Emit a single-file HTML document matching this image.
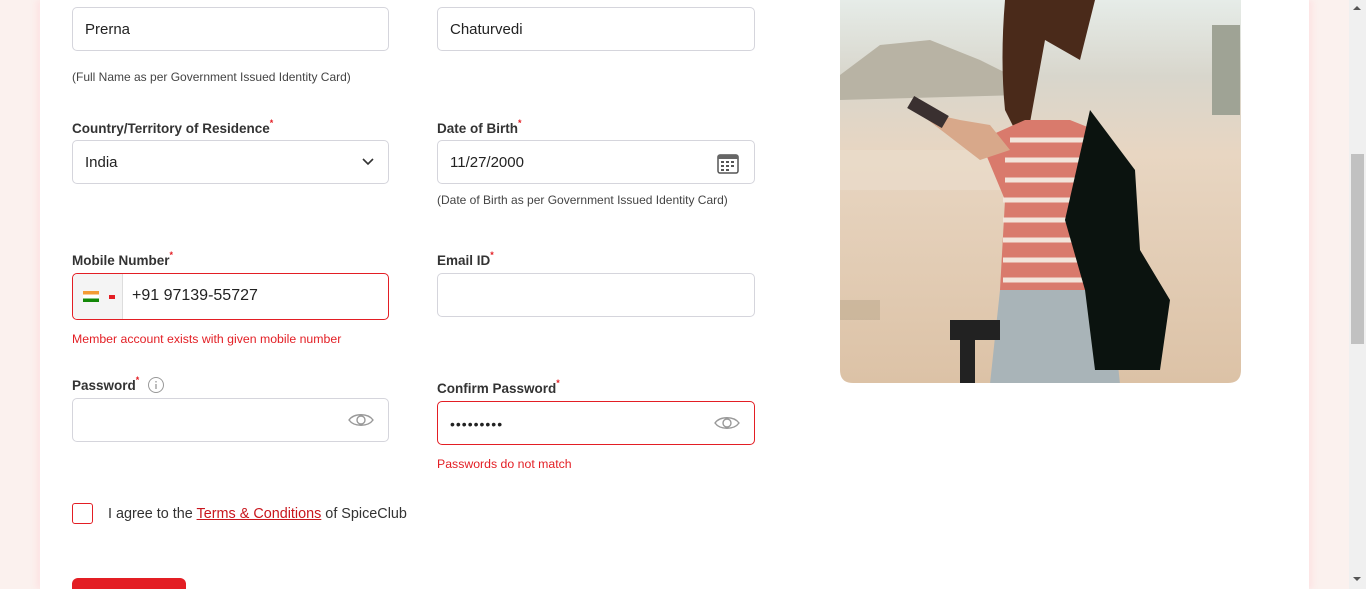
<!DOCTYPE html>
<html><head><style>
*{margin:0;padding:0;box-sizing:border-box}
html,body{width:1366px;height:589px;overflow:hidden}
body{background:#fbf1ee;font-family:"Liberation Sans",sans-serif;position:relative;color:#333}
.card{position:absolute;left:40px;top:0;width:1269px;height:589px;background:#fff;box-shadow:-4px 0 6px #fde4e4,4px 0 6px #fde4e4}
.a{position:absolute}
.inp{position:absolute;height:44px;border:1px solid #d5d5dc;border-radius:5px;background:#fff;font-size:15px;color:#222;padding-left:12px;line-height:44px}
.err{border-color:#e31e24}
.lbl{position:absolute;font-size:13.5px;font-weight:bold;color:#333}
.lbl sup{color:#e31e24;font-size:9px;vertical-align:top;position:relative;top:-3px}
.hint{position:absolute;font-size:12px;color:#444}
.em{position:absolute;font-size:12.3px;color:#e31e24}
.sb{position:absolute;left:1349px;top:0;width:17px;height:589px;background:#f0f0f0}
</style></head><body>
<div class="card"></div>
<div class="inp" style="left:72px;top:7px;width:317px">Prerna</div>
<div class="inp" style="left:437px;top:7px;width:318px">Chaturvedi</div>
<div class="hint" style="left:72px;top:70px">(Full Name as per Government Issued Identity Card)</div>

<div class="lbl" style="left:72px;top:121px">Country/Territory of Residence<sup>*</sup></div>
<div class="inp" style="left:72px;top:140px;width:317px">India
<svg class="a" style="left:288px;top:16px" width="14" height="10"><path d="M2 2l5 5 5-5" fill="none" stroke="#333" stroke-width="1.6"/></svg></div>
<div class="lbl" style="left:437px;top:121px">Date of Birth<sup>*</sup></div>
<div class="inp" style="left:437px;top:140px;width:318px">11/27/2000
<svg class="a" style="left:278px;top:10px" width="24" height="24"><rect x="2" y="4" width="20" height="18" rx="2" fill="#fff" stroke="#555" stroke-width="1.5"/><rect x="2" y="4" width="20" height="4" fill="#666"/><g fill="#555"><rect x="5" y="10" width="3" height="2"/><rect x="10" y="10" width="3" height="2"/><rect x="15" y="10" width="3" height="2"/><rect x="5" y="14" width="3" height="2"/><rect x="10" y="14" width="3" height="2"/><rect x="15" y="14" width="3" height="2"/><rect x="5" y="18" width="3" height="2"/><rect x="10" y="18" width="3" height="2"/></g></svg></div>
<div class="hint" style="left:437px;top:193px">(Date of Birth as per Government Issued Identity Card)</div>

<div class="lbl" style="left:72px;top:253px">Mobile Number<sup>*</sup></div>
<div class="inp err" style="left:72px;top:273px;width:317px;height:47px;padding-left:0">
<div class="a" style="left:0;top:0;width:50px;height:45px;background:#f4f4f4;border-right:1px solid #ddd;border-radius:5px 0 0 5px"></div>
<div class="a" style="left:10px;top:17px;width:16px;height:11px;background:linear-gradient(#f39b34 33%,#fff 33%,#fff 66%,#138808 66%)"></div>
<div class="a" style="left:36px;top:21px;width:6px;height:4px;background:#e31e24"></div>
<div class="a" style="left:59px;top:0;font-size:16px">+91 97139-55727</div></div>
<div class="em" style="left:72px;top:332px">Member account exists with given mobile number</div>
<div class="lbl" style="left:437px;top:253px">Email ID<sup>*</sup></div>
<div class="inp" style="left:437px;top:273px;width:318px"></div>

<div class="lbl" style="left:72px;top:378px">Password<sup>*</sup></div>
<svg class="a" style="left:147px;top:376px" width="18" height="18"><circle cx="9" cy="9" r="7.5" fill="none" stroke="#999"/><path d="M9 8v5M9 5v1.5" stroke="#999" stroke-width="1.3"/></svg>
<div class="inp" style="left:72px;top:398px;width:317px">
<svg class="a" style="left:274px;top:12px" width="28" height="18"><path d="M2 9C7 2 21 2 26 9 21 16 7 16 2 9z" fill="none" stroke="#999" stroke-width="1.4"/><circle cx="14" cy="9" r="4" fill="none" stroke="#999" stroke-width="1.4"/></svg></div>
<div class="lbl" style="left:437px;top:381px">Confirm Password<sup>*</sup></div>
<div class="inp err" style="left:437px;top:401px;width:318px;letter-spacing:1px;font-size:14px">•••••••••
<svg class="a" style="left:275px;top:12px" width="28" height="18"><path d="M2 9C7 2 21 2 26 9 21 16 7 16 2 9z" fill="none" stroke="#999" stroke-width="1.4"/><circle cx="14" cy="9" r="4" fill="none" stroke="#999" stroke-width="1.4"/></svg></div>
<div class="em" style="left:437px;top:457px">Passwords do not match</div>

<div class="a" style="left:72px;top:503px;width:21px;height:21px;border:1.5px solid #e31e24;border-radius:3px"></div>
<div class="a" style="left:108px;top:506px;font-size:14.4px;color:#333">I agree to the <span style="color:#c8161d;text-decoration:underline">Terms &amp; Conditions</span> of SpiceClub</div>
<div class="a" style="left:72px;top:578px;width:114px;height:11px;background:#e31e24;border-radius:6px 6px 0 0"></div>

<svg class="a" style="left:840px;top:0" width="401" height="384">
<defs><clipPath id="c"><path d="M0 0H401V370Q401 383 388 383H13Q0 383 0 370z"/></clipPath>
<linearGradient id="g" x1="0" y1="0" x2="0" y2="1"><stop offset="0" stop-color="#e6ece8"/><stop offset=".2" stop-color="#d8d6cc"/><stop offset=".4" stop-color="#e8d6c2"/><stop offset="1" stop-color="#dcc2a6"/></linearGradient></defs>
<g clip-path="url(#c)">
<rect width="401" height="384" fill="url(#g)"/>
<path d="M0 75L40 45 90 40 140 60 180 80 180 95 0 100z" fill="#b8b3a4"/>
<rect x="372" y="25" width="28" height="90" fill="#9fa395"/>
<rect x="0" y="150" width="180" height="40" fill="#e9dccb" opacity=".7"/>
<path d="M165 0Q160 60 165 110L185 150 205 40 240 60 255 0z" fill="#4a2a1a"/>
<path d="M140 140L185 120 230 120 255 130 262 190 270 300 200 310 160 290 165 200z" fill="#d97a6c"/>
<g stroke="#f2e4da" stroke-width="5"><path d="M170 140H260M165 160H262M165 180H264M163 200H266M163 220H268M163 240H268M163 260H268M163 280H268"/></g>
<path d="M160 290H270L280 384H150z" fill="#a9b4b8"/>
<path d="M75 110L140 160 170 150 150 125 120 120z" fill="#d8a88a"/>
<rect x="68" y="105" width="40" height="14" fill="#3a3030" transform="rotate(30 88 112)"/>
<path d="M250 110L295 170 300 250 330 300 320 370 255 370 245 290 225 220z" fill="#0b130f"/>
<path d="M110 320H160V340H135V384H120V340H110z" fill="#222"/>
<rect x="0" y="300" width="40" height="20" fill="#b8a58a" opacity=".5"/>
</g></svg>
<div class="sb"><div class="a" style="left:2px;top:154px;width:13px;height:190px;background:#c1c1c1"></div>
<div class="a" style="left:4px;top:6px;border:4px solid transparent;border-bottom:4px solid #555;border-top:0;width:0"></div>
<div class="a" style="left:4px;top:577px;border:4px solid transparent;border-top:4px solid #555;border-bottom:0;width:0"></div></div>
</body></html>
